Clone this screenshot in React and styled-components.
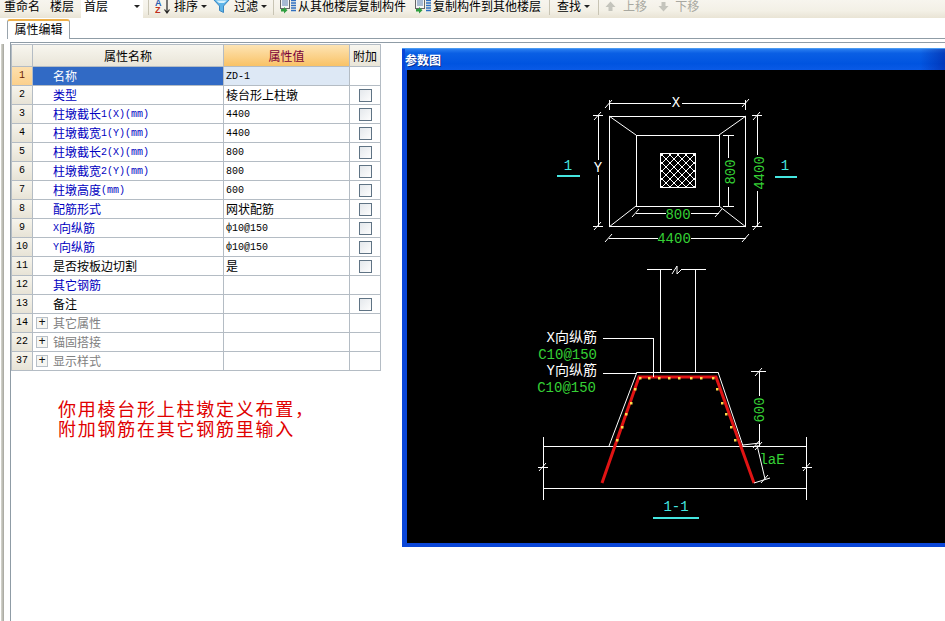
import styled, { createGlobalStyle } from "styled-components";

const GlobalStyle = createGlobalStyle`
  html, body {
    margin: 0;
    padding: 0;
    background: #fff;
  }
`

const CJK = `"Noto Sans CJK SC", "Liberation Sans", sans-serif`;
const MONO = `"Liberation Mono", "Noto Sans CJK SC", monospace`;
const GREEN = "#35d035";
const CYAN = "#45e6e0";

const rows = [
  { no: "1", name: "名称", value: "ZD-1", blue: true, selected: true },
  { no: "2", name: "类型", value: "棱台形上柱墩", blue: true, check: true },
  { no: "3", name: "柱墩截长1(X)(mm)", value: "4400", blue: true, check: true },
  { no: "4", name: "柱墩截宽1(Y)(mm)", value: "4400", blue: true, check: true },
  { no: "5", name: "柱墩截长2(X)(mm)", value: "800", blue: true, check: true },
  { no: "6", name: "柱墩截宽2(Y)(mm)", value: "800", blue: true, check: true },
  { no: "7", name: "柱墩高度(mm)", value: "600", blue: true, check: true },
  { no: "8", name: "配筋形式", value: "网状配筋", blue: true, check: true },
  { no: "9", name: "X向纵筋", value: "ф10@150", blue: true, check: true },
  { no: "10", name: "Y向纵筋", value: "ф10@150", blue: true, check: true },
  { no: "11", name: "是否按板边切割", value: "是", check: true },
  { no: "12", name: "其它钢筋", value: "", blue: true },
  { no: "13", name: "备注", value: "", check: true },
  { no: "14", name: "其它属性", value: "", group: true },
  { no: "22", name: "锚固搭接", value: "", group: true },
  { no: "37", name: "显示样式", value: "", group: true },
];

const bars = [
  [640, 378], [649, 378], [659, 378], [669, 378], [679, 378], [691, 378], [701, 378], [713, 378],
  [635, 389], [631, 403], [626, 414], [622, 427], [617, 440],
  [717, 389], [722, 403], [726, 414], [731, 427], [735, 440],
];

// small latin runs use the narrow mono face, chinese stays at 12px
const Mixed = ({ text }) => (
  <CellText>
    {text.split(/([\x20-\x7e\u0444]+)/).filter(Boolean).map((part, i) =>
      /^[\x20-\x7e\u0444]+$/.test(part) ? <Latin key={i}>{part}</Latin> : <span key={i}>{part}</span>
    )}
  </CellText>
);

const SortIcon = () => (
  <svg width="16" height="18" viewBox="0 0 16 18">
    <IconLetter x="0" y="9" fill="#2a5db0">A</IconLetter>
    <IconLetter x="0" y="16" fill="#c03020">Z</IconLetter>
    <path d="M12 3v12M9.500 12.500l2.500 3.500 2.500-3.500" fill="none" stroke="#222" strokeWidth="1.200" />
  </svg>
);

const FunnelIcon = () => (
  <svg width="17" height="14" viewBox="0 0 17 14">
    <path d="M0.500 0.500h16l-6 6.500v6.500l-4-2v-4.500z" fill="#5db4e8" stroke="#3a86c0" />
    <path d="M3 1.500h11l-3 2.500h-5z" fill="#d6f0fb" />
  </svg>
);

const CopyIcon = () => (
  <svg width="18" height="16" viewBox="0 0 18 16">
    <rect x="1.500" y="0.500" width="9" height="10" fill="#f4f4f4" stroke="#666" />
    <path d="M3 3h6M3 5h6M3 7h6" stroke="#5a7fb0" />
    <path d="M2 11h3v-2l3.500 3.200-3.500 3.300v-2h-3z" fill="#2f9e3f" />
    <path d="M12 2.500h5M12 5h5M12 7.500h5M12 10h5M12 12.500h5" stroke="#2f6fc0" strokeWidth="1.500" />
  </svg>
);

const MoveIcon = ({ down }) => (
  <svg width="11" height="11" viewBox="0 0 11 11">
    <path d={down ? "M3.500 1h4v4h3l-5 5.500-5-5.500h3z" : "M3.500 10h4v-4h3l-5-5.500-5 5.500h3z"} fill="#c4c4bc" />
  </svg>
);

const Tick = ({ x, y }) => <WhiteLine x1={x - 4} y1={y + 4} x2={x + 3} y2={y - 4} />;

const Drawing = () => {
  const hatch = [];
  for (let i = -5; i <= 9; i++) {
    hatch.push(<WhiteLine key={"a" + i} x1={660 + i * 8} y1={153} x2={695 + i * 8} y2={188} />);
    hatch.push(<WhiteLine key={"b" + i} x1={696 - i * 8} y1={153} x2={661 - i * 8} y2={188} />);
  }

  return (
    <svg width="538" height="473" viewBox="407 70 538 473">
      {/* plan view */}
      <WhiteRect x="609.500" y="116.500" width="136" height="110" />
      <WhiteRect x="636.500" y="135.500" width="83" height="71" />
      <WhiteLine x1="609" y1="116" x2="636" y2="135" />
      <WhiteLine x1="746" y1="116" x2="719" y2="135" />
      <WhiteLine x1="609" y1="227" x2="636" y2="206" />
      <WhiteLine x1="746" y1="227" x2="719" y2="206" />
      <clipPath id="mesh"><rect x="660" y="153" width="36" height="35" /></clipPath>
      <g clipPath="url(#mesh)">{hatch}</g>
      <WhiteRect x="660.500" y="153.500" width="35" height="34" />

      <WhiteLine x1="609" y1="103.500" x2="671" y2="103.500" />
      <WhiteLine x1="682" y1="103.500" x2="746" y2="103.500" />
      <WhiteLine x1="609.500" y1="100" x2="609.500" y2="110" />
      <WhiteLine x1="745.500" y1="100" x2="745.500" y2="110" />
      <Tick x={609} y={104} /><Tick x={746} y={103} />
      <CadText x="676" y="103" $color="#fff">X</CadText>

      <WhiteLine x1="598.500" y1="116" x2="598.500" y2="160" />
      <WhiteLine x1="598.500" y1="175" x2="598.500" y2="227" />
      <WhiteLine x1="593" y1="115.500" x2="603" y2="115.500" />
      <WhiteLine x1="593" y1="226.500" x2="603" y2="226.500" />
      <Tick x={598} y={116} /><Tick x={598} y={226} />
      <CadText x="598" y="168" $color="#fff">Y</CadText>

      <WhiteLine x1="757.500" y1="116" x2="757.500" y2="155" />
      <WhiteLine x1="757.500" y1="191" x2="757.500" y2="227" />
      <WhiteLine x1="752" y1="115.500" x2="762" y2="115.500" />
      <WhiteLine x1="752" y1="226.500" x2="762" y2="226.500" />
      <Tick x={757} y={116} /><Tick x={757} y={226} />
      <CadText x="760" y="173" $color={GREEN} transform="rotate(-90 760 173)">4400</CadText>

      <WhiteLine x1="728.500" y1="135" x2="728.500" y2="158" />
      <WhiteLine x1="728.500" y1="187" x2="728.500" y2="207" />
      <WhiteLine x1="723" y1="135.500" x2="734" y2="135.500" />
      <WhiteLine x1="723" y1="206.500" x2="734" y2="206.500" />
      <CadText x="731" y="172" $color={GREEN} transform="rotate(-90 731 172)">800</CadText>

      <WhiteLine x1="636" y1="213.500" x2="666" y2="213.500" />
      <WhiteLine x1="691" y1="213.500" x2="719" y2="213.500" />
      <Tick x={636} y={213} /><Tick x={719} y={213} />
      <CadText x="678" y="215" $color={GREEN}>800</CadText>

      <WhiteLine x1="609" y1="238.500" x2="658" y2="238.500" />
      <WhiteLine x1="691" y1="238.500" x2="746" y2="238.500" />
      <Tick x={609} y={238} /><Tick x={746} y={238} />
      <CadText x="674" y="239" $color={GREEN}>4400</CadText>

      <CadText x="568" y="166" $color={CYAN}>1</CadText>
      <CyanLine x1="557" y1="176" x2="580" y2="176" />
      <CadText x="785" y="166" $color={CYAN}>1</CadText>
      <CyanLine x1="775" y1="177" x2="797" y2="177" />

      {/* section 1-1 */}
      <WhiteLine x1="647" y1="269.500" x2="672" y2="269.500" />
      <WhiteLine x1="681" y1="269.500" x2="706" y2="269.500" />
      <WhiteLine x1="672" y1="274" x2="677" y2="266" />
      <WhiteLine x1="677" y1="266" x2="677" y2="274" />
      <WhiteLine x1="677" y1="274" x2="682" y2="269" />
      <WhiteLine x1="660.500" y1="269" x2="660.500" y2="372" />
      <WhiteLine x1="695.500" y1="269" x2="695.500" y2="372" />
      <WhiteLine x1="637" y1="372.500" x2="718" y2="372.500" />
      <WhiteLine x1="637" y1="372" x2="609" y2="446" />
      <WhiteLine x1="718" y1="372" x2="743" y2="446" />

      <WhiteLine x1="543" y1="446.500" x2="807" y2="446.500" />
      <WhiteLine x1="543" y1="488.500" x2="807" y2="488.500" />
      <WhiteLine x1="543.500" y1="437" x2="543.500" y2="500" />
      <WhiteLine x1="806.500" y1="437" x2="806.500" y2="500" />
      <WhiteLine x1="538" y1="467.500" x2="548" y2="467.500" />
      <WhiteLine x1="802" y1="467.500" x2="812" y2="467.500" />
      <Tick x={543} y={467} /><Tick x={807} y={467} />

      <RedBar points="602,483 639,377 716,377 754,483" />
      {bars.map(([x, y]) => <Dot key={x + "-" + y} x={x - 1} y={y - 1} width="2.500" height="2.500" />)}

      <CadLabel x="597" y="338" $color="#fff">X向纵筋</CadLabel>
      <CadLabel x="597" y="355" $color={GREEN}>C10@150</CadLabel>
      <CadLabel x="597" y="371" $color="#fff">Y向纵筋</CadLabel>
      <CadLabel x="596" y="388" $color={GREEN}>C10@150</CadLabel>
      <WhiteLine x1="603" y1="338.500" x2="654" y2="338.500" />
      <WhiteLine x1="653.500" y1="338" x2="653.500" y2="377" />
      <WhiteLine x1="603" y1="373.500" x2="637" y2="373.500" />

      <WhiteLine x1="759.500" y1="372" x2="759.500" y2="396" />
      <WhiteLine x1="759.500" y1="424" x2="759.500" y2="446" />
      <WhiteLine x1="751" y1="371.500" x2="766" y2="371.500" />
      <Tick x={759} y={372} /><Tick x={759} y={446} />
      <CadText x="760" y="410" $color={GREEN} transform="rotate(-90 760 410)">600</CadText>

      <WhiteLine x1="743" y1="445" x2="760" y2="443" />
      <WhiteLine x1="754" y1="483" x2="770" y2="478" />
      <WhiteLine x1="757" y1="445" x2="765" y2="479" />
      <Tick x={757} y={444} /><Tick x={765} y={479} />
      <CadText x="772" y="460" $color={GREEN}>laE</CadText>

      <CadText x="676" y="507" $color={CYAN}>1-1</CadText>
      <CyanLine x1="653" y1="518" x2="699" y2="518" />
    </svg>
  )
}

const App = () => {
  return (
    <Page>
      <GlobalStyle />
      <Toolbar>
        <ToolText $ml={0}>重命名</ToolText>
        <ToolText $ml={10}>楼层</ToolText>
        <FloorSelect>首层<Caret /></FloorSelect>
        <ToolSep $ml={5} />
        <ToolIcon $ml={6}><SortIcon /></ToolIcon>
        <ToolText $ml={3}>排序</ToolText>
        <Caret $ml={3} />
        <ToolIcon $ml={6}><FunnelIcon /></ToolIcon>
        <ToolText $ml={4}>过滤</ToolText>
        <Caret $ml={3} />
        <ToolSep $ml={6} />
        <ToolIcon $ml={5}><CopyIcon /></ToolIcon>
        <ToolText $ml={1}>从其他楼层复制构件</ToolText>
        <ToolIcon $ml={8}><CopyIcon /></ToolIcon>
        <ToolText $ml={1}>复制构件到其他楼层</ToolText>
        <ToolSep $ml={8} />
        <ToolText $ml={7}>查找</ToolText>
        <Caret $ml={3} />
        <ToolSep $ml={8} />
        <ToolIcon $ml={6}><MoveIcon /></ToolIcon>
        <ToolText $ml={7} $disabled>上移</ToolText>
        <ToolIcon $ml={11}><MoveIcon down /></ToolIcon>
        <ToolText $ml={6} $disabled>下移</ToolText>
      </Toolbar>
      <Body>
        <Rail />
        <Main>
          <TabStrip>
            <Tab>属性编辑</Tab>
          </TabStrip>
          <Frame>
            <LeftColumn>
              <PropTable>
                <colgroup>
                  <col width="21" />
                  <col width="191" />
                  <col width="126" />
                  <col width="31" />
                </colgroup>
                <thead>
                  <tr>
                    <HeadCell />
                    <HeadCell>属性名称</HeadCell>
                    <HeadCell $active>属性值</HeadCell>
                    <HeadCell>附加</HeadCell>
                  </tr>
                </thead>
                <tbody>
                  {rows.map((row) => (
                    <tr key={row.no}>
                      <NoCell $selected={row.selected}>{row.no}</NoCell>
                      <NameCell $selected={row.selected} $blue={row.blue} $group={row.group}>
                        {row.group ? (
                          <GroupLabel><PlusBox>+</PlusBox>{row.name}</GroupLabel>
                        ) : (
                          <Mixed text={row.name} />
                        )}
                      </NameCell>
                      <ValueCell $selected={row.selected}><Mixed text={row.value} /></ValueCell>
                      <CheckCell>{row.check && <CheckBox />}</CheckCell>
                    </tr>
                  ))}
                </tbody>
              </PropTable>
              <Note>
                <div>你用棱台形上柱墩定义布置，</div>
                <div>附加钢筋在其它钢筋里输入</div>
              </Note>
            </LeftColumn>
            <ParamWindow>
              <TitleBar>参数图</TitleBar>
              <Canvas><Drawing /></Canvas>
            </ParamWindow>
          </Frame>
        </Main>
      </Body>
    </Page>
  )
}

const Page = styled.div`
  width: 945px;
  height: 621px;
  overflow: hidden;
  display: flex;
  flex-direction: column;
  background: #fff;
  font-family: ${CJK};
  font-size: 12px;
  color: #000;
`

const Toolbar = styled.div`
  height: 18px;
  flex: none;
  display: flex;
  align-items: center;
  padding: 0 0 6px 4px;
  box-sizing: border-box;
  background: linear-gradient(#f7f5ee, #f3f0e6 60%, #e9e4d5);
  white-space: nowrap;
`

const ToolText = styled.span`
  margin-left: ${(p) => p.$ml}px;
  line-height: 12px;
  color: ${(p) => (p.$disabled ? "#a8a8a0" : "#000")};
`

const ToolIcon = styled.span`
  margin-left: ${(p) => p.$ml}px;
  display: flex;
  align-items: center;
`

const ToolSep = styled.span`
  margin-left: ${(p) => p.$ml}px;
  width: 1px;
  height: 16px;
  margin-top: 2px;
  background: #c8c4b4;
`

const Caret = styled.span`
  margin-left: ${(p) => p.$ml || 0}px;
  width: 0;
  height: 0;
  border-left: 3px solid transparent;
  border-right: 3px solid transparent;
  border-top: 3px solid #222;
`

const FloorSelect = styled.div`
  margin-left: 7px;
  margin-bottom: -6px;
  width: 62px;
  height: 18px;
  box-sizing: border-box;
  padding: 0 3px 6px 3px;
  display: flex;
  align-items: center;
  justify-content: space-between;
  background: #fff;
  line-height: 12px;
`

const IconLetter = styled.text`
  font-family: "Liberation Sans", sans-serif;
  font-size: 9px;
  font-weight: 700;
`

const Body = styled.div`
  flex: 1;
  min-height: 0;
  display: flex;
`

const Rail = styled.div`
  width: 3px;
  margin: 26px 3px 0 1px;
  background: linear-gradient(90deg, #d8d8d0, #a4a49c);
`

const Main = styled.div`
  flex: 1;
  min-width: 0;
  display: flex;
  flex-direction: column;
`

const TabStrip = styled.div`
  height: 21px;
  flex: none;
  box-sizing: border-box;
  padding-top: 1px;
  border-bottom: 1px solid #8f9ca6;
  display: flex;
`

const Tab = styled.div`
  width: 63px;
  height: 20px;
  box-sizing: border-box;
  text-align: center;
  line-height: 16px;
  background: #fff;
  border: 1px solid #9aa4ac;
  border-top: 2px solid #eeb04a;
  border-bottom: none;
  border-radius: 3px 3px 0 0;
`

const Frame = styled.div`
  flex: 1;
  min-height: 0;
  margin: 3px 0 0 3px;
  border-top: 1px solid #8f9ca6;
  border-left: 1px solid #8f9ca6;
  padding-top: 1px;
  display: flex;
  align-items: flex-start;
`

const LeftColumn = styled.div`
  flex: none;
  width: 370px;
`

const PropTable = styled.table`
  width: 370px;
  table-layout: fixed;
  border-collapse: separate;
  border-spacing: 0;
  border-top: 1px solid #b4bcc4;
  border-left: 1px solid #b4bcc4;
  font-size: 12px;
  line-height: 18px;

  td, th {
    padding: 0;
    box-sizing: border-box;
    border-right: 1px solid #b4bcc4;
    border-bottom: 1px solid #b4bcc4;
    overflow: hidden;
    white-space: nowrap;
    height: 19px;
  }
`

const HeadCell = styled.th`
  && {
    height: 22px;
  }
  font-weight: 400;
  text-align: center;
  color: ${(p) => (p.$active ? "#7a0038" : "#000")};
  background: ${(p) =>
    p.$active
      ? "linear-gradient(#fde4b4, #f9c266)"
      : "linear-gradient(#f8f6ef, #e9e5d8)"};
`

const NoCell = styled.td`
  text-align: center;
  font-family: ${MONO};
  font-size: 10px;
  color: ${(p) => (p.$selected ? "#6a1a00" : "#000")};
  background: ${(p) =>
    p.$selected
      ? "linear-gradient(#fde0ae, #fbd08c)"
      : "linear-gradient(#f6f4ec, #e7e3d6)"};
`

const NameCell = styled.td`
  padding-left: ${(p) => (p.$group ? "3px" : "20px")} !important;
  background: ${(p) => (p.$selected ? "#316ac5" : "#fff")};
  color: ${(p) => {
    if (p.$selected) return "#fff";
    if (p.$group) return "#808080";
    return p.$blue ? "#0000c0" : "#000";
  }};
`

const ValueCell = styled.td`
  padding-left: 2px !important;
  background: ${(p) => (p.$selected ? "#dde8f5" : "#fff")};
`

const CheckCell = styled.td`
  text-align: center;
  vertical-align: middle;
  font-size: 0;
`

const CheckBox = styled.span`
  display: inline-block;
  width: 13px;
  height: 13px;
  box-sizing: border-box;
  vertical-align: middle;
  border: 1px solid #5f7384;
  background: linear-gradient(135deg, #e4e8ec, #fdfdfd);
`

const CellText = styled.div`
  display: flex;
  align-items: center;
  height: 18px;
`

const Latin = styled.span`
  font-family: ${MONO};
  font-size: 10px;
  margin-top: 2px;
`

const GroupLabel = styled.div`
  display: flex;
  align-items: center;
  gap: 5px;
  height: 18px;
`

const PlusBox = styled.span`
  width: 12px;
  height: 12px;
  box-sizing: border-box;
  border: 1px solid #b8c0c8;
  background: #f6f6f2;
  color: #111;
  display: flex;
  align-items: center;
  justify-content: center;
  font-family: ${MONO};
  font-size: 12px;
  line-height: 10px;
`

const Note = styled.div`
  margin: 27px 0 0 47px;
  color: #e00000;
  font-size: 18px;
  line-height: 20px;
  letter-spacing: 1.75px;
  white-space: nowrap;
`

const ParamWindow = styled.div`
  flex: none;
  width: 560px;
  height: 499px;
  margin: 4px 0 0 21px;
  box-sizing: border-box;
  padding: 0 0 4px 5px;
  background: #0a46d8;
  border-top: 1px solid #4a9af0;
  display: flex;
  flex-direction: column;
`

const TitleBar = styled.div`
  height: 21px;
  margin-left: -2px;
  flex: none;
  line-height: 21px;
  color: #fff;
  font-weight: 700;
  font-size: 12px;
  text-shadow: 1px 1px 0 #0a2f90;
  background:
    linear-gradient(90deg, transparent 515px, rgba(0, 20, 140, 0.45) 540px),
    linear-gradient(#2a7ef0, #0a5fe4 20%, #0054e0 70%, #0a5ae6);
`

const Canvas = styled.div`
  flex: 1;
  min-height: 0;
  background: #000;
  overflow: hidden;

  svg {
    display: block;
  }
`

const WhiteLine = styled.line`
  stroke: #fff;
  stroke-width: 1;
`

const WhiteRect = styled.rect`
  fill: none;
  stroke: #fff;
  stroke-width: 1;
`

const CyanLine = styled.line`
  stroke: ${CYAN};
  stroke-width: 2;
`

const RedBar = styled.polyline`
  fill: none;
  stroke: #e01414;
  stroke-width: 3;
`

const Dot = styled.rect`
  fill: #ffd84a;
`

const CadText = styled.text`
  fill: ${(p) => p.$color};
  font-family: ${MONO};
  font-size: 14px;
  text-anchor: middle;
  dominant-baseline: central;
`

const CadLabel = styled(CadText)`
  text-anchor: end;
`

export default App;
